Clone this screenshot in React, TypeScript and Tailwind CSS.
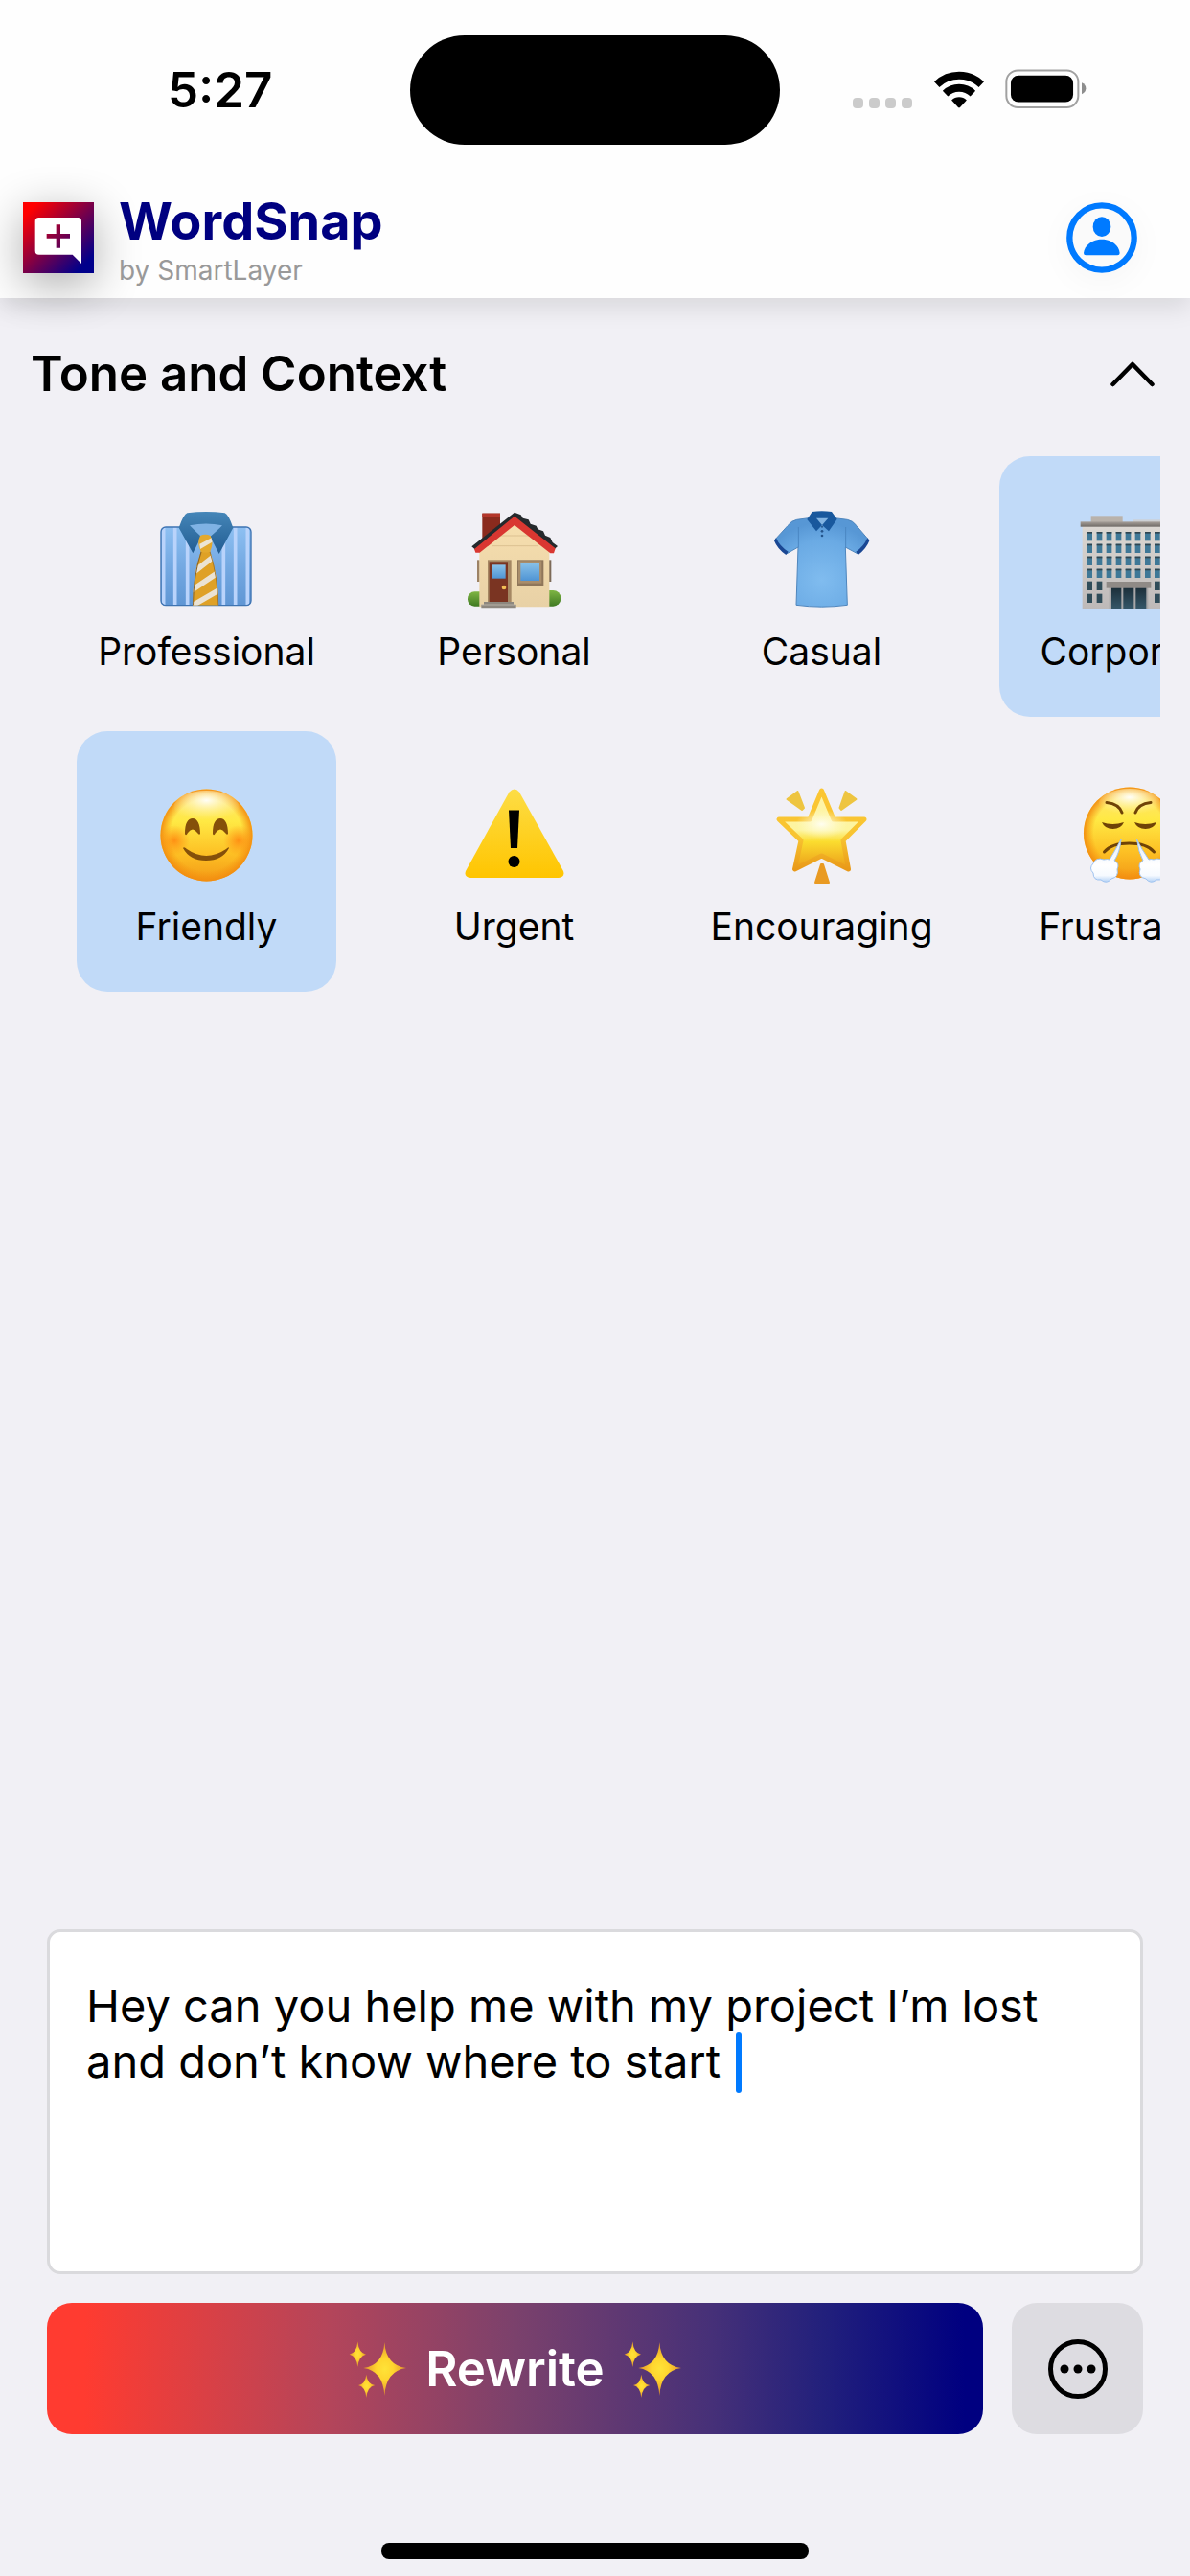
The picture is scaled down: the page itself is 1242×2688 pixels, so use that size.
import { useState, type ReactNode } from "react";

const SPARKLE_LARGE = "M190 134Q194 206 258 215Q194 224 190 302Q186 224 124 215Q186 206 190 134Z";
const SPARKLE_TOP = "M106 132Q109 168 132 172Q109 177 106 212Q103 177 80 172Q103 168 106 132Z";
const SPARKLE_BOTTOM = "M133 235Q136 265 160 269Q136 273 133 308Q130 273 108 269Q130 265 133 235Z";

function Sparkles() {
  return (
    <svg viewBox="78 128 180 180" className="size-[60px] shrink-0" aria-hidden="true">
      <defs>
        <radialGradient id="sparkle" cx="0.5" cy="0.5" r="0.5">
          <stop offset="0" stopColor="#ffe338" />
          <stop offset="0.4" stopColor="#ffd52e" />
          <stop offset="1" stopColor="#e0902c" />
        </radialGradient>
      </defs>
      <g fill="url(#sparkle)">
        <path d={SPARKLE_LARGE} />
        <path d={SPARKLE_TOP} />
        <path d={SPARKLE_BOTTOM} />
      </g>
    </svg>
  );
}

function Logo() {
  return (
    <svg viewBox="75 94 222 222" className="size-[74px] shrink-0 shadow-[0_12px_48px_rgba(0,0,0,0.32)]" aria-hidden="true">
      <defs>
        <linearGradient id="logo" gradientUnits="userSpaceOnUse" x1="100" y1="115" x2="272" y2="285">
          <stop offset="0" stopColor="#ff0000" />
          <stop offset="1" stopColor="#00008b" />
        </linearGradient>
      </defs>
      <rect x="75" y="94" width="222" height="222" fill="url(#logo)" />
      <path d="M125 142H247Q258 142 258 153V286L230 258H125Q113 258 113 246V153Q113 142 125 142Z" fill="#fff" />
      <path d="M179 164h13v29h30v14h-30v30h-13v-30h-30v-14h30Z" fill="url(#logo)" />
    </svg>
  );
}

function ProfileIcon() {
  return (
    <svg viewBox="757 485 222 222" className="size-[74px]" aria-hidden="true">
      <circle cx="868" cy="596" r="101" fill="#fafafa" stroke="#007aff" strokeWidth="19" />
      <ellipse cx="868" cy="562" rx="28" ry="31" fill="#007aff" />
      <path d="M811 644C813 622 836 601 868 601S922 622 924 644Q924 651 917 651H818Q811 651 811 644Z" fill="#007aff" />
    </svg>
  );
}

function WifiIcon() {
  return (
    <svg viewBox="341 67 156 119" className="h-[39px] w-[52px]" aria-hidden="true">
      <g fill="none" stroke="#000" strokeWidth="24">
        <path d="M348 110A103 103 0 0 1 490 110" />
        <path d="M375 139A63 63 0 0 1 463 139" />
      </g>
      <path d="M395 160A34 34 0 0 1 443 160L422 183Q419 186 416 183Z" />
    </svg>
  );
}

function BatteryIcon() {
  return (
    <svg viewBox="565 66 256 123" className="h-[41px] w-[85px]" aria-hidden="true">
      <rect x="569" y="70" width="226" height="116" rx="36" fill="none" stroke="#a1a1a1" strokeWidth="6" />
      <rect x="583" y="86" width="196" height="84" rx="24" />
      <path d="M806 109Q819 115 819 127T806 145Z" fill="#8e8e8e" />
    </svg>
  );
}

function DressShirt() {
  return (
    <svg viewBox="72 96 312 312" className="size-[104px]" aria-hidden="true">
      <defs>
        <linearGradient id="ds-body" x1="0" y1="0" x2="0" y2="1">
          <stop offset="0" stopColor="#8ec0f2" />
          <stop offset="0.5" stopColor="#74a9e2" />
          <stop offset="1" stopColor="#5f96d4" />
        </linearGradient>
        <linearGradient id="ds-collar" x1="0" y1="0" x2="0" y2="1">
          <stop offset="0" stopColor="#4586b8" />
          <stop offset="1" stopColor="#215c92" />
        </linearGradient>
        <clipPath id="ds-clip">
          <rect x="83" y="149" width="284" height="247" rx="15" />
        </clipPath>
        <clipPath id="ds-tie">
          <path d="M209 226H238Q262 300 265 395H183Q184 300 209 226Z" />
        </clipPath>
      </defs>
      <g clipPath="url(#ds-clip)">
        <rect x="83" y="149" width="284" height="247" fill="url(#ds-body)" />
        <path d="M92 149V396M128 149V396M167 149V396M280 149V396M317 149V396M355 149V396" stroke="#b9d3fb" strokeWidth="11" />
      </g>
      <rect x="84" y="150" width="282" height="245" rx="15" fill="none" stroke="#3f74b2" strokeWidth="4" />
      <path d="M165 142Q225 128 285 142L262 190 222 180 190 190Z" fill="#7fb2e4" />
      <path d="M166 106Q225 98 284 106Q295 110 310 152L266 234 238 180Q262 160 276 145Q225 134 174 145Q188 160 210 180L184 232 140 152Q155 110 166 106Z" fill="url(#ds-collar)" />
      <g clipPath="url(#ds-tie)">
        <rect x="180" y="224" width="90" height="176" fill="#dfa126" />
        <path d="M180 296L270 226M180 348L275 284M178 398L275 342" stroke="#ebe3d3" strokeWidth="17" />
        <path d="M183 395Q184 300 209 226" fill="none" stroke="#8b6528" strokeWidth="6" />
        <path d="M265 395Q262 300 238 226" fill="none" stroke="#9b732f" strokeWidth="5" />
      </g>
      <path d="M207 177Q223 170 239 177Q250 198 238 227Q223 232 209 227Q195 200 207 177Z" fill="#e3a92e" />
      <path d="M205 203L242 184 244 197 207 219Z" fill="#ece5d6" />
    </svg>
  );
}

function House() {
  return (
    <svg viewBox="75 96 312 312" className="size-[104px]" aria-hidden="true">
      <defs>
        <linearGradient id="h-wall" x1="0" y1="0" x2="0" y2="1">
          <stop offset="0" stopColor="#f7dfae" />
          <stop offset="1" stopColor="#e8d1a6" />
        </linearGradient>
        <linearGradient id="h-glass" x1="0" y1="0" x2="0" y2="1">
          <stop offset="0" stopColor="#8ac2e8" />
          <stop offset="1" stopColor="#4f94d4" />
        </linearGradient>
        <linearGradient id="h-bush" x1="0" y1="0" x2="0" y2="1">
          <stop offset="0" stopColor="#7fb544" />
          <stop offset="1" stopColor="#3f7a22" />
        </linearGradient>
      </defs>
      <rect x="114" y="253" width="8" height="68" fill="#9c8265" />
      <rect x="337" y="253" width="9" height="68" fill="#7c6a58" />
      <rect x="84" y="352" width="60" height="46" rx="22" fill="url(#h-bush)" />
      <rect x="316" y="348" width="60" height="50" rx="24" fill="url(#h-bush)" />
      <rect x="130" y="107" width="56" height="90" fill="#8a2a1d" />
      <rect x="130" y="107" width="56" height="12" fill="#b3362a" />
      <path d="M121 215L231 128 340 215V400H121Z" fill="url(#h-wall)" />
      <path d="M185 177H278M160 209H304" stroke="#dcc191" strokeWidth="3" />
      <path d="M97 211L231 104 251 112 257 122 275 127 281 140 299 146 304 157 321 163 327 176 343 183 350 198 366 210 350 224 231 135 112 224Z" fill="#25292c" />
      <path d="M105 219L231 116 359 217 354 232H343L231 144 122 230H109Z" fill="#d93731" />
      <rect x="147" y="253" width="74" height="132" fill="#a58763" />
      <rect x="152" y="259" width="58" height="126" fill="#7a3422" />
      <rect x="162" y="268" width="41" height="43" fill="url(#h-glass)" />
      <circle cx="198" cy="339" r="7" fill="#f3bf55" />
      <rect x="240" y="253" width="82" height="80" fill="#8f765a" />
      <rect x="243" y="256" width="73" height="70" fill="#a98d6b" />
      <rect x="250" y="261" width="59" height="57" fill="url(#h-glass)" />
      <path d="M135 384H228V393H236V403H127V393H135Z" fill="#8d877f" />
      <path d="M127 393H236" stroke="#b7b1a7" strokeWidth="3" />
    </svg>
  );
}

function PoloShirt() {
  return (
    <svg viewBox="78 96 312 312" className="size-[104px]" aria-hidden="true">
      <defs>
        <radialGradient id="p-body" cx="0.5" cy="0.7" r="0.65">
          <stop offset="0" stopColor="#80bcef" />
          <stop offset="0.7" stopColor="#6aaae4" />
          <stop offset="1" stopColor="#5797d5" />
        </radialGradient>
      </defs>
      <path d="M192 122L155 127Q138 130 126 146L86 190 122 234 159 213 153 394Q233 405 313 394L307 213 346 234 380 190 342 146Q330 130 313 127L274 122Z" fill="url(#p-body)" stroke="#4f86bd" strokeWidth="3" />
      <path d="M160 150V214M308 150V214" stroke="#4a86c2" strokeWidth="3" />
      <path d="M90 184Q102 212 128 227L121 237Q94 219 84 193Z" fill="#1a4793" />
      <path d="M376 184Q364 212 340 227L347 237Q372 219 382 193Z" fill="#1a4793" />
      <path d="M216 122H253L234 148Z" fill="#86b7e4" />
      <path d="M203 102Q233 98 264 102L281 125 255 163 234 144 216 163 187 126Z" fill="#19589d" />
      <path d="M216 122H253L234 144Z" fill="#83b4e2" />
      <g fill="#24558c">
        <circle cx="234" cy="149" r="3" />
        <circle cx="234" cy="163" r="4" />
        <circle cx="234" cy="177" r="4" />
      </g>
    </svg>
  );
}

function OfficeBuilding() {
  const columns = [316, 347, 377, 407, 437, 467, 498, 528, 558];
  const sides = [316, 347, 528, 558];
  return (
    <svg viewBox="294 216 312 312" className="size-[104px]" aria-hidden="true">
      <defs>
        <linearGradient id="b-wall" x1="0" y1="0" x2="0" y2="1">
          <stop offset="0" stopColor="#ddd8d3" />
          <stop offset="1" stopColor="#bdb9b8" />
        </linearGradient>
        <linearGradient id="b-roof" x1="0" y1="0" x2="0" y2="1">
          <stop offset="0" stopColor="#a7a09a" />
          <stop offset="1" stopColor="#6f6a66" />
        </linearGradient>
        <linearGradient id="b-door" x1="0" y1="0" x2="0" y2="1">
          <stop offset="0" stopColor="#1c2f3a" />
          <stop offset="1" stopColor="#36586a" />
        </linearGradient>
      </defs>
      <rect x="329" y="235" width="99" height="20" fill="#b9b2ab" />
      <rect x="462" y="247" width="110" height="8" fill="#cdd0d4" />
      <rect x="302" y="262" width="291" height="266" fill="url(#b-wall)" />
      <rect x="296" y="253" width="303" height="16" fill="url(#b-roof)" />
      {[285, 323, 362, 401].map((y) =>
        columns.map((x) => (
          <g key={`${x}-${y}`}>
            <rect x={x} y={y} width="17" height="28" fill="#3f7897" />
            <rect x={x} y={y} width="17" height="5" fill="#31454f" />
          </g>
        )),
      )}
      {[440, 479].map((y) => sides.map((x) => <rect key={`${x}-${y}`} x={x} y={y} width="17" height="28" fill="#2f4c59" />))}
      <rect x="386" y="458" width="122" height="70" fill="#a9a7a8" />
      <rect x="377" y="441" width="140" height="20" fill="#8f8a86" />
      <rect x="393" y="461" width="31" height="66" fill="url(#b-door)" />
      <rect x="430" y="461" width="33" height="66" fill="url(#b-door)" />
      <rect x="469" y="461" width="33" height="66" fill="url(#b-door)" />
    </svg>
  );
}

function FaceGradients() {
  return (
    <defs>
      <linearGradient id="f-base" x1="0" y1="0" x2="0" y2="1">
        <stop offset="0" stopColor="#ffe27a" />
        <stop offset="0.35" stopColor="#ffe944" />
        <stop offset="0.7" stopColor="#fdc024" />
        <stop offset="1" stopColor="#f39a16" />
      </linearGradient>
      <radialGradient id="f-edge" cx="0.5" cy="0.5" r="0.5">
        <stop offset="0.78" stopColor="#f6930f" stopOpacity="0" />
        <stop offset="1" stopColor="#f28c10" stopOpacity="0.95" />
      </radialGradient>
      <radialGradient id="f-shine" cx="0.5" cy="0.3" r="0.6">
        <stop offset="0" stopColor="#fff" stopOpacity="0.95" />
        <stop offset="1" stopColor="#fff6a0" stopOpacity="0" />
      </radialGradient>
      <radialGradient id="f-cheek" cx="0.5" cy="0.5" r="0.5">
        <stop offset="0" stopColor="#ff7a0a" stopOpacity="0.75" />
        <stop offset="1" stopColor="#ff8a10" stopOpacity="0" />
      </radialGradient>
      <linearGradient id="f-steam" x1="0" y1="0" x2="0" y2="1">
        <stop offset="0" stopColor="#e3eefc" />
        <stop offset="0.6" stopColor="#fff" />
        <stop offset="0.85" stopColor="#f6faff" />
        <stop offset="1" stopColor="#b4d2f6" />
      </linearGradient>
    </defs>
  );
}

function SmilingFace() {
  return (
    <svg viewBox="0 0 104 104" className="size-[104px]" aria-hidden="true">
      <FaceGradients />
      <circle cx="51.5" cy="52.5" r="48" fill="url(#f-base)" />
      <circle cx="51.5" cy="52.5" r="48" fill="url(#f-edge)" />
      <ellipse cx="51.5" cy="23" rx="34" ry="17" fill="url(#f-shine)" />
      <circle cx="18" cy="58" r="16" fill="url(#f-cheek)" />
      <circle cx="85" cy="58" r="16" fill="url(#f-cheek)" />
      <g fill="#85500a">
        <path d="M29 51C29 40 32 35 37 35S45 41 45 51Q44 53 42 50Q37 43 32 50Q30 54 29 51Z" />
        <path d="M58 51C58 40 61 35 66 35S74 41 74 51Q73 53 71 50Q66 43 61 50Q59 54 58 51Z" />
        <path d="M27 66Q28 64 31 67Q51 81 72 67Q75 64 75 66Q68 79 51 79T27 66Z" />
      </g>
    </svg>
  );
}

function Warning() {
  return (
    <svg viewBox="0 0 104 104" className="size-[104px]" aria-hidden="true">
      <defs>
        <linearGradient id="w-fill" x1="0" y1="0" x2="0" y2="1">
          <stop offset="0" stopColor="#fddd45" />
          <stop offset="1" stopColor="#ffc500" />
        </linearGradient>
      </defs>
      <path d="M46.500 7.500Q52 1.500 57 7.500L103 90Q105 96.500 98 97H6Q-1 96.500 1 90Z" fill="url(#w-fill)" />
      <path d="M46 26.500H57L55 66H48Z" />
      <circle cx="51.500" cy="80" r="6" />
    </svg>
  );
}

function GlowingStar() {
  return (
    <svg viewBox="0 0 104 104" className="size-[104px]" aria-hidden="true">
      <defs>
        <linearGradient id="s-fill" x1="0" y1="0" x2="0" y2="1">
          <stop offset="0" stopColor="#fff3a8" />
          <stop offset="0.5" stopColor="#fdf5a0" />
          <stop offset="0.65" stopColor="#fbdd2f" />
          <stop offset="1" stopColor="#eb9a18" />
        </linearGradient>
        <linearGradient id="s-line" x1="0" y1="0" x2="0" y2="1">
          <stop offset="0" stopColor="#fbc633" />
          <stop offset="0.6" stopColor="#f8c431" />
          <stop offset="1" stopColor="#e99918" />
        </linearGradient>
        <radialGradient id="s-shine" cx="0.5" cy="0.5" r="0.5">
          <stop offset="0" stopColor="#fffef0" />
          <stop offset="1" stopColor="#fffbd0" stopOpacity="0" />
        </radialGradient>
      </defs>
      <path d="M51.500 6L64 36H96L74 58 79.500 88 51.500 74 23.500 88 30 58 7 36H39Z" fill="url(#s-fill)" stroke="url(#s-line)" strokeWidth="5" strokeLinejoin="round" />
      <ellipse cx="51.500" cy="41" rx="27" ry="15" fill="url(#s-shine)" />
      <g strokeWidth="2" strokeLinejoin="round">
        <path d="M26.500 7L15.500 15 31 26 33 24Z" fill="#eec540" stroke="#eec540" />
        <path d="M76.500 7L87.500 15 72 26 70.500 24Z" fill="#eec540" stroke="#eec540" />
        <path d="M51 83H53L59 102H45Z" fill="#e99a22" stroke="#e99a22" />
      </g>
    </svg>
  );
}

function SteamFace() {
  return (
    <svg viewBox="0 0 104 104" className="size-[104px]" aria-hidden="true">
      <FaceGradients />
      <circle cx="52" cy="50.5" r="48" fill="url(#f-base)" />
      <circle cx="52" cy="50.5" r="48" fill="url(#f-edge)" />
      <ellipse cx="52" cy="19" rx="32" ry="15" fill="url(#f-shine)" />
      <g fill="none" stroke="#6f4307" strokeLinecap="round" strokeWidth="3">
        <path d="M28 18.500Q41 20 44 29" />
        <path d="M74 18.500Q61 20 58 29" />
        <path d="M25.500 70Q33 61 51.500 61T77.500 70" />
      </g>
      <path d="M23 39Q34 43 46 39Q43 46 34.500 46T23 39ZM57 39Q68 43 80 39Q77 46 68.500 46T57 39Z" fill="#6f4307" />
      <g fill="url(#f-steam)" stroke="#9fc3f0" strokeWidth="1">
        <path d="M43 57Q42 70 36 79Q42 82 39 88Q41 96 33 98Q28 104 22 99Q14 100 14 92Q9 87 14 82Q17 75 25 78Q29 77 31 78Q37 68 43 57Z" />
        <path d="M59.500 57Q61 70 66 79Q60 82 63 88Q60 96 69 98Q74 104 80 99Q88 100 88 92Q93 87 88 82Q85 75 77 78Q74 77 72 78Q65 68 59.500 57Z" />
      </g>
    </svg>
  );
}

type Tone = { label: string; icon: ReactNode };

const tones: Tone[] = [
  { label: "Professional", icon: <DressShirt /> },
  { label: "Personal", icon: <House /> },
  { label: "Casual", icon: <PoloShirt /> },
  { label: "Corporate", icon: <OfficeBuilding /> },
  { label: "Friendly", icon: <SmilingFace /> },
  { label: "Urgent", icon: <Warning /> },
  { label: "Encouraging", icon: <GlowingStar /> },
  { label: "Frustrated", icon: <SteamFace /> },
];

export default function App() {
  const [selected, setSelected] = useState<string[]>(["Corporate", "Friendly"]);
  const [open, setOpen] = useState(true);
  const [message, setMessage] = useState("Hey can you help me with my project I’m lost and don’t know where to start ");

  const toggle = (label: string) =>
    setSelected((s) => (s.includes(label) ? s.filter((l) => l !== label) : [...s, label]));

  return (
    <div className="flex min-h-screen flex-col bg-[#f1f0f5] font-['Inter',sans-serif] text-black">
      <header className="relative bg-[#fefefe] pb-[13px] shadow-[0_10px_24px_rgba(0,0,0,0.1)]">
        <div className="grid grid-cols-[1fr_386px_1fr] items-center pt-[37px]">
          <div className="pl-[175px] text-[51px] leading-[60px] font-semibold">5:27</div>
          <div className="h-[114px] rounded-full bg-black" />
          <div className="flex items-end justify-end pr-[108px] pb-1">
            <div className="mr-[23px] flex gap-[6px]">
              {[0, 1, 2, 3].map((i) => (
                <span key={i} className="size-[11px] rounded-[4px] bg-[#cbcbcb]" />
              ))}
            </div>
            <WifiIcon />
            <div className="ml-[22px]">
              <BatteryIcon />
            </div>
          </div>
        </div>
        <div className="mt-[50px] flex items-start pr-[55px] pl-6">
          <div className="mt-[10px]">
            <Logo />
          </div>
          <div className="ml-[26px] flex-1">
            <h1 className="text-[54px] leading-[60px] font-bold text-[#000080]">WordSnap</h1>
            <p className="mt-[5px] text-[28px] leading-8 text-[#999]">by SmartLayer</p>
          </div>
          <button type="button" aria-label="Profile" className="mt-[10px] rounded-full shadow-[0_8px_36px_rgba(0,0,0,0.04)]">
            <ProfileIcon />
          </button>
        </div>
      </header>

      <main className="flex-1 pt-[49px]">
        <button
          type="button"
          aria-expanded={open}
          onClick={() => setOpen(!open)}
          className="flex w-full items-center justify-between pr-[36px] pl-[32px] text-left"
        >
          <span className="text-[51px] leading-[60px] font-semibold">Tone and Context</span>
          <svg viewBox="0 0 48 28" className="h-[28px] w-[48px]" fill="none" stroke="#000" strokeWidth="4.500" strokeLinecap="round" strokeLinejoin="round" aria-hidden="true">
            <path d="M3.500 25L24 4 44.500 25" />
          </svg>
        </button>
        {open && (
          <div className="mx-[31px] mt-[56px] overflow-x-auto [scrollbar-width:none]">
            <div className="grid grid-cols-[repeat(4,271px)] gap-x-[50px] gap-y-[15px] pl-[49px]">
              {tones.map((tone) => (
                <button
                  key={tone.label}
                  type="button"
                  aria-pressed={selected.includes(tone.label)}
                  onClick={() => toggle(tone.label)}
                  className={`flex h-[272px] flex-col items-center rounded-[32px] pt-14 ${
                    selected.includes(tone.label) ? "bg-[#c1daf8]" : ""
                  }`}
                >
                  {tone.icon}
                  <span className="mt-5 text-[39px] leading-[48px]">{tone.label}</span>
                </button>
              ))}
            </div>
          </div>
        )}
      </main>

      <footer className="px-[49px] pb-[18px]">
        <div className="relative">
          <textarea
            aria-label="Message"
            value={message}
            onChange={(e) => setMessage(e.target.value)}
            className="block h-[360px] w-full resize-none rounded-[14px] border-3 border-[#dadadd] bg-white px-[38px] py-[48px] text-[47px] leading-[58px] caret-[#007aff] outline-none"
          />
          <span className="absolute top-[107px] left-[719px] h-[64px] w-[6px] rounded-full bg-[#007aff]" aria-hidden="true" />
        </div>
        <div className="mt-[30px] flex gap-[30px]">
          <button
            type="button"
            className="flex h-[137px] flex-1 items-center justify-center gap-[20px] rounded-[26px] bg-[linear-gradient(90deg,#ff3b30_4%,#b4455a_30%,#7b416c_50%,#463078_71%,#22207c_83%,#000080_98%)] text-[51px] leading-[60px] font-semibold text-white"
          >
            <Sparkles />
            <span>Rewrite</span>
            <Sparkles />
          </button>
          <button type="button" aria-label="More options" className="flex size-[137px] items-center justify-center rounded-[26px] bg-[#dddce1]">
            <svg viewBox="0 0 62 62" className="size-[62px]" aria-hidden="true">
              <circle cx="31" cy="31" r="28.500" fill="none" stroke="#000" strokeWidth="5" />
              <circle cx="17" cy="31" r="4.500" />
              <circle cx="31" cy="31" r="4.500" />
              <circle cx="45" cy="31" r="4.500" />
            </svg>
          </button>
        </div>
        <div className="mx-auto mt-[114px] h-[16px] w-[446px] rounded-full bg-black" />
      </footer>
    </div>
  );
}
